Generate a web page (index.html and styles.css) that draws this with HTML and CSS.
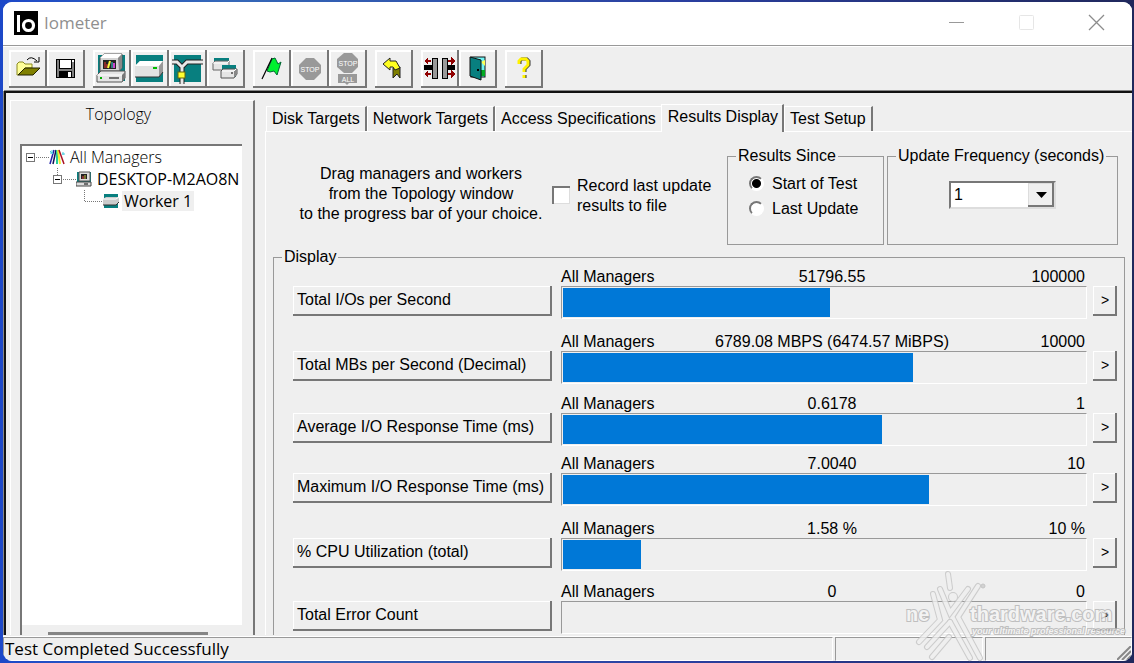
FILE: index.html
```html
<!DOCTYPE html>
<html lang="en">
<head>
    <meta charset="UTF-8">
    <meta name="viewport" content="width=device-width, initial-scale=1.0">
    <title>Iometer</title>
    <link rel="stylesheet" href="styles.css">
</head>
<body>

<div class="window">
    <header class="titlebar">
        <svg class="logo" viewBox="0 0 24 24" aria-hidden="true">
            <rect width="24" height="24" fill="#000"/>
            <rect x="3" y="4" width="3" height="17" fill="#fff"/>
            <circle cx="14.500" cy="14.500" r="5" fill="none" stroke="#fff" stroke-width="3.200"/>
        </svg>
        <h1>Iometer</h1>
        <div class="window-buttons">
            <button type="button" aria-label="Minimize"><svg viewBox="0 0 16 16"><path d="M0 7.500H15" stroke="#999"/></svg></button>
            <button type="button" aria-label="Maximize" disabled><svg viewBox="0 0 16 16"><rect x="0.500" y="0.500" width="14" height="14" rx="1" fill="none" stroke="#e6e6e6"/></svg></button>
            <button type="button" aria-label="Close"><svg viewBox="0 0 16 16"><path d="M0 0L15 15M15 0L0 15" stroke="#8c8c8c" stroke-width="1.300"/></svg></button>
        </div>
    </header>

    <nav class="toolbar" aria-label="Toolbar">
        <div class="tool-group">
            <button type="button" aria-label="Open">
                <svg viewBox="0 0 38 38">
                    <path d="M8 25V14L10 12H14L16 14H23V18H16L9 25Z" fill="#ffff99" stroke="#8a8a20"/>
                    <path d="M9 25L16 18H31L24 25Z" fill="#808000" stroke="#222200"/>
                    <path d="M18 10Q22 5 28 11M30 7V12H25" fill="none" stroke="#000"/>
                </svg>
            </button>
            <button type="button" aria-label="Save">
                <svg viewBox="0 0 38 38" shape-rendering="crispEdges">
                    <rect x="9" y="9" width="19" height="19" fill="#000"/>
                    <rect x="10" y="10" width="17" height="17" fill="#808080"/>
                    <rect x="12" y="9" width="13" height="10" fill="#000"/>
                    <rect x="13" y="10" width="11" height="8" fill="#fff"/>
                    <rect x="12" y="21" width="13" height="7" fill="#000"/>
                    <rect x="21" y="22" width="3" height="5" fill="#fff"/>
                    <rect x="25" y="10" width="2" height="2" fill="#fff"/>
                </svg>
            </button>
        </div>
        <div class="tool-group">
            <button type="button" aria-label="New manager">
                <svg viewBox="0 0 38 38">
                    <rect x="5" y="5" width="27" height="26" fill="#087f7f"/>
                    <path d="M7 8L11 4H29V18L26 21H7Z" fill="#d4d4d4" stroke="#555"/>
                    <path d="M7 8L11 4H29L25 8Z" fill="#fff"/>
                    <path d="M25 8L29 4V18L26 21Z" fill="#888"/>
                    <rect x="10" y="10" width="13" height="9" fill="#222"/>
                    <path d="M12 18V12M14 18V14" stroke="#e33"/>
                    <path d="M15 18L17 11" stroke="#f7f73b" stroke-width="2"/>
                    <path d="M19 18V12" stroke="#39d9d9"/>
                    <path d="M21 18V13" stroke="#c4c" stroke-width="2"/>
                    <path d="M4 25L8 21H32V28L29 32H4Z" fill="#e4e4e4" stroke="#555"/>
                    <path d="M29 25L32 22V28L29 32Z" fill="#777"/>
                    <path d="M4 25H29" stroke="#fff"/>
                    <path d="M16 28H26" stroke="#000"/>
                    <path d="M7 28H9" stroke="#0a0" stroke-width="2"/>
                </svg>
            </button>
            <button type="button" aria-label="New disk worker">
                <svg viewBox="0 0 38 38">
                    <rect x="5" y="5" width="27" height="27" fill="#087f7f"/>
                    <path d="M4 16L9 11H32V22L28 27H4Z" fill="#e2e2e2"/>
                    <path d="M4 16L9 11H32L28 16Z" fill="#fff"/>
                    <path d="M28 16L32 11V22L28 27Z" fill="#999"/>
                    <path d="M4 27H28L32 22" fill="none" stroke="#333"/>
                    <path d="M22 18H26" stroke="#0b0" stroke-width="2"/>
                </svg>
            </button>
            <button type="button" aria-label="New network worker">
                <svg viewBox="0 0 38 38">
                    <rect x="5" y="5" width="27" height="27" fill="#087f7f"/>
                    <path d="M3 12H8L13 17L18 12H34M13 17V34" fill="none" stroke="#222" stroke-width="5"/>
                    <path d="M3 12H8L13 17L18 12H34M13 17V34" fill="none" stroke="#e8e8e8" stroke-width="3"/>
                    <rect x="9" y="22" width="7" height="6" fill="#ffff30" stroke="#66660a"/>
                </svg>
            </button>
            <button type="button" aria-label="Duplicate worker">
                <svg viewBox="0 0 38 38">
                    <rect x="7" y="8" width="15" height="9" fill="#087f7f"/>
                    <path d="M6 13L8 11H22V17L20 20H6Z" fill="#e5e5e5" stroke="#666"/>
                    <path d="M6 13H20L22 11" fill="none" stroke="#fff"/>
                    <rect x="15" y="15" width="14" height="12" fill="#087f7f"/>
                    <path d="M14 21L16 19H30V24L27 28H14Z" fill="#e5e5e5" stroke="#555"/>
                    <path d="M27 21L30 19V24L27 28Z" fill="#888"/>
                    <path d="M15 21H27L29 19" fill="none" stroke="#fff"/>
                    <path d="M24 23H26" stroke="#000"/>
                </svg>
            </button>
        </div>
        <div class="tool-group">
            <button type="button" aria-label="Start tests">
                <svg viewBox="0 0 38 38">
                    <path d="M19 9L22 8L25 14L28 12L24 25L21 21L17 22L14 21Z" fill="#00f030" stroke="#063"/>
                    <path d="M9 29L19 8" stroke="#000" stroke-width="1.200"/>
                </svg>
            </button>
            <button type="button" aria-label="Stop test">
                <svg viewBox="0 0 38 38">
                    <path d="M15 8H23L30 15V23L23 30H15L8 23V15Z" fill="#999"/>
                    <text x="19" y="22" class="sign">STOP</text>
                </svg>
            </button>
            <button type="button" aria-label="Stop all tests">
                <svg viewBox="0 0 38 38">
                    <path d="M15 3H23L29 9V17L23 23H15L8 17V9Z" fill="#999"/>
                    <path d="M9 24H28V33H20L18 35L16 33H9Z" fill="#999"/>
                    <text x="19" y="16" class="sign">STOP</text>
                    <text x="19" y="32" class="sign">ALL</text>
                </svg>
            </button>
        </div>
        <div class="tool-group">
            <button type="button" aria-label="Reset">
                <svg viewBox="0 0 38 38">
                    <path d="M18 18L25 17V28L22 24L18 28Z" fill="#808000" stroke="#222"/>
                    <path d="M8 14L15 8V11H21L25 18L20 20L18 17H15V20Z" fill="#ffff20" stroke="#222"/>
                </svg>
            </button>
        </div>
        <div class="tool-group">
            <button type="button" aria-label="Disconnect">
                <svg viewBox="0 0 38 38" shape-rendering="crispEdges">
                    <rect x="3" y="15" width="8" height="5" fill="#000"/>
                    <rect x="27" y="15" width="7" height="5" fill="#000"/>
                    <rect x="11" y="8" width="5" height="20" fill="#999" stroke="#000"/>
                    <rect x="21" y="8" width="5" height="20" fill="#999" stroke="#000"/>
                    <path d="M5 11H10M5 24H10M27 11H33M27 24H33" stroke="#900000" stroke-width="2"/>
                    <path d="M7 7V15L3 11ZM7 20V28L3 24ZM30 7V15L34 11ZM30 20V28L34 24Z" fill="#900000"/>
                </svg>
            </button>
            <button type="button" aria-label="Exit">
                <svg viewBox="0 0 38 38">
                    <rect x="12" y="7" width="14" height="20" fill="#70f5f5" stroke="#111"/>
                    <path d="M22 12L26 10V16Z" fill="#ff5"/>
                    <rect x="22" y="20" width="4" height="6" fill="#0a2"/>
                    <path d="M11 7L22 10V30L11 26Z" fill="#087f7f" stroke="#111"/>
                    <path d="M19 19V21" stroke="#000" stroke-width="2"/>
                </svg>
            </button>
        </div>
        <div class="tool-group">
            <button type="button" aria-label="About">
                <svg viewBox="0 0 38 38">
                    <g fill="none" stroke-width="3">
                        <path d="M15 14V11L17 9H22L24 11V15L20 19V22M20 25V28" stroke="#333"/>
                        <path d="M14 14V11L16 9H21L23 11V15L19 19V22M19 25V28" stroke="#fff200"/>
                    </g>
                </svg>
            </button>
        </div>
    </nav>

    <main>
        <aside class="topology">
            <h2>Topology</h2>
            <div class="tree-box">
                <ul class="tree">
                    <li>
                        <div class="node">
                            <svg class="twig" viewBox="0 0 23 22">
                                <rect x="0.500" y="7.500" width="8" height="8" fill="#fff" stroke="#777"/>
                                <path d="M2 11.500H7" stroke="#000"/>
                                <path d="M10 11.500H23" stroke="#777" stroke-dasharray="1 1"/>
                            </svg>
                            <svg class="node-icon" viewBox="0 0 16 16">
                                <path d="M5 1L1 15" stroke="#22a" stroke-width="1.500"/>
                                <path d="M7 1L4 15" stroke="#115" stroke-width="1.500"/>
                                <path d="M8 1V15" stroke="#2c9" stroke-width="2"/>
                                <path d="M9 1L11 15" stroke="#ee3" stroke-width="2"/>
                                <path d="M10 1L15 15" stroke="#a12" stroke-width="1.500"/>
                                <path d="M1 2L4 5M3 1V5M1 4H4M14 3V6M13 5H16" stroke="#4cd"/>
                            </svg>
                            <span>All Managers</span>
                        </div>
                        <ul>
                            <li>
                                <div class="node">
                                    <svg class="twig" viewBox="0 0 23 22">
                                        <path d="M4.500 0V7M10 11.500H23" stroke="#777" stroke-dasharray="1 1"/>
                                        <rect x="0.500" y="7.500" width="8" height="8" fill="#fff" stroke="#777"/>
                                        <path d="M2 11.500H7" stroke="#000"/>
                                    </svg>
                                    <svg class="node-icon" viewBox="0 0 16 16">
                                        <rect x="1" y="1" width="14" height="14" fill="#087f7f"/>
                                        <path d="M3 1H14V10H3Z" fill="#ddd" stroke="#555"/>
                                        <rect x="5" y="3" width="6" height="5" fill="#222"/>
                                        <path d="M7 8V5" stroke="#e44"/>
                                        <path d="M9 8V4" stroke="#cc4"/>
                                        <path d="M0 11H15V15H0Z" fill="#ddd" stroke="#444"/>
                                        <path d="M8 13H12" stroke="#000"/>
                                    </svg>
                                    <span>DESKTOP-M2AO8N</span>
                                </div>
                                <ul>
                                    <li>
                                        <div class="node">
                                            <svg class="twig" viewBox="0 0 23 22">
                                                <path d="M4.500 0V11.500H23" fill="none" stroke="#777" stroke-dasharray="1 1"/>
                                            </svg>
                                            <svg class="node-icon" viewBox="0 0 16 16">
                                                <rect x="1" y="1" width="14" height="14" fill="#087f7f"/>
                                                <path d="M0 6L3 4H16V9L13 12H0Z" fill="#ccc"/>
                                                <path d="M0 6H13L16 4" fill="none" stroke="#fff"/>
                                                <path d="M0 12H13L16 9" fill="none" stroke="#333"/>
                                            </svg>
                                            <span class="selected">Worker 1</span>
                                        </div>
                                    </li>
                                </ul>
                            </li>
                        </ul>
                    </li>
                </ul>
                <div class="scrollbar"><div class="thumb"></div></div>
            </div>
        </aside>

        <section class="results">
            <div class="tabs" role="tablist">
                <button type="button" role="tab">Disk Targets</button>
                <button type="button" role="tab">Network Targets</button>
                <button type="button" role="tab">Access Specifications</button>
                <button type="button" role="tab" class="active" aria-selected="true">Results Display</button>
                <button type="button" role="tab">Test Setup</button>
            </div>

            <div class="pane" role="tabpanel">
                <div class="options">
                    <p>Drag managers and workers<br>from the Topology window<br>to the progress bar of your choice.</p>
                    <div class="record">
                        <input type="checkbox" id="record">
                        <label for="record">Record last update<br>results to file</label>
                    </div>
                    <fieldset>
                        <legend>Results Since</legend>
                        <div class="choice">
                            <input type="radio" name="since" id="sinceStart" checked>
                            <label for="sinceStart">Start of Test</label>
                        </div>
                        <div class="choice">
                            <input type="radio" name="since" id="sinceUpdate">
                            <label for="sinceUpdate">Last Update</label>
                        </div>
                    </fieldset>
                    <fieldset>
                        <legend><label for="frequency">Update Frequency (seconds)</label></legend>
                        <div class="combo">
                            <select id="frequency">
                                <option>1</option>
                                <option>2</option>
                                <option>5</option>
                            </select>
                            <span class="combo-arrow"><svg viewBox="0 0 11 6"><path d="M0 0H11L5.500 6Z"/></svg></span>
                        </div>
                    </fieldset>
                </div>

                <fieldset class="display">
                    <legend>Display</legend>
                    <div class="meters">
                        <div class="meter">
                            <button type="button" class="metric">Total I/Os per Second</button>
                            <div class="readout"><span>All Managers</span><span>51796.55</span><span>100000</span></div>
                            <div class="bar"><div class="fill" style="width: 51.2%"></div></div>
                            <button type="button" class="more">&gt;</button>
                        </div>
                        <div class="meter">
                            <button type="button" class="metric">Total MBs per Second (Decimal)</button>
                            <div class="readout"><span>All Managers</span><span>6789.08 MBPS (6474.57 MiBPS)</span><span>10000</span></div>
                            <div class="bar"><div class="fill" style="width: 67%"></div></div>
                            <button type="button" class="more">&gt;</button>
                        </div>
                        <div class="meter">
                            <button type="button" class="metric">Average I/O Response Time (ms)</button>
                            <div class="readout"><span>All Managers</span><span>0.6178</span><span>1</span></div>
                            <div class="bar"><div class="fill" style="width: 61.1%"></div></div>
                            <button type="button" class="more">&gt;</button>
                        </div>
                        <div class="meter">
                            <button type="button" class="metric">Maximum I/O Response Time (ms)</button>
                            <div class="readout"><span>All Managers</span><span>7.0040</span><span>10</span></div>
                            <div class="bar"><div class="fill" style="width: 70.1%"></div></div>
                            <button type="button" class="more">&gt;</button>
                        </div>
                        <div class="meter">
                            <button type="button" class="metric">% CPU Utilization (total)</button>
                            <div class="readout"><span>All Managers</span><span>1.58 %</span><span>10 %</span></div>
                            <div class="bar"><div class="fill" style="width: 15%"></div></div>
                            <button type="button" class="more">&gt;</button>
                        </div>
                        <div class="meter">
                            <button type="button" class="metric">Total Error Count</button>
                            <div class="readout"><span>All Managers</span><span>0</span><span>0</span></div>
                            <div class="bar"><div class="fill" style="width: 0%"></div></div>
                            <button type="button" class="more">&gt;</button>
                        </div>
                    </div>
                </fieldset>
            </div>
        </section>
    </main>

    <footer class="statusbar">
        <span>Test Completed Successfully</span>
        <span></span>
        <span>
            <svg class="grip" viewBox="0 0 14 14"><path d="M0 14L14 0M5 14L14 5M10 14L14 10" stroke="#888" stroke-width="2"/></svg>
        </span>
    </footer>
</div>

<svg class="watermark" viewBox="0 0 234 95" aria-hidden="true">
    <g class="mark-edge">
        <path d="M33 26L40 52L19 74M50 54L27 79M49 69L32 89M48 6L50 20"/>
        <path d="M40 21L50 45L68 21M78 18L58 49L80 90M50 54L70 90"/>
        <circle cx="53" cy="29" r="2"/>
    </g>
    <g class="mark-fill">
        <path d="M33 26L40 52L19 74M50 54L27 79M49 69L32 89M48 6L50 20"/>
        <path d="M40 21L50 45L68 21M78 18L58 49L80 90M50 54L70 90"/>
        <circle cx="53" cy="29" r="2"/>
    </g>
    <circle cx="83" cy="18" r="2" fill="#ccc" stroke="#bbb"/>
    <text x="6" y="53" class="mark-name">ne</text>
    <text x="70" y="53" class="mark-name">thardware.com</text>
    <text x="72" y="66" class="mark-line">your ultimate professional resource</text>
</svg>

</body>
</html>
```
FILE: styles.css
```css
* {
    box-sizing: border-box;
}
body {
    margin: 0;
    padding: 2px 2px 2px 3px;
    height: 100vh;
    overflow: hidden;
    position: relative;
    font-family: "Liberation Sans", Arial, sans-serif;
    font-size: 16px;
    line-height: 20px;
    color: #000;
    background: linear-gradient(90deg, #1d48c8 0%, #3568b8 20%, #2a3fa0 60%, #20285c 100%);
}
h1, h2, p, ul {
    margin: 0;
    padding: 0;
    font-weight: normal;
}
button, select {
    font: inherit;
    color: inherit;
}
svg {
    display: block;
}

/* window frame */
.window {
    display: flex;
    flex-direction: column;
    height: 100%;
    border-radius: 9px;
    overflow: hidden;
    background-color: #efefef;
}
.titlebar {
    display: flex;
    align-items: center;
    height: 44px;
    padding: 0 12px 2px 11px;
    flex: none;
    background-color: #fff;
    border-bottom: 1px solid #999;
}
.logo {
    width: 24px;
    height: 24px;
}
.titlebar h1 {
    flex: 1;
    padding-left: 6px;
    font-family: "Open Sans", sans-serif;
    font-size: 17px;
    color: #8f8f8f;
}
.window-buttons {
    display: flex;
    gap: 24px;
}
.window-buttons button {
    display: flex;
    justify-content: center;
    width: 46px;
    padding: 0;
    border: none;
    background: none;
}
.window-buttons svg {
    width: 16px;
    height: 16px;
    overflow: visible;
}

/* toolbar */
.toolbar {
    display: flex;
    flex: none;
    gap: 8px;
    padding: 3px 6px;
    border-top: 1px solid #fff;
}
.tool-group {
    display: flex;
}
.tool-group button {
    width: 38px;
    height: 38px;
    padding: 0;
    border: none;
    background-color: #efefef;
    box-shadow: inset -2px -2px #777, inset 2px 2px #fff;
}
.tool-group svg {
    width: 38px;
    height: 38px;
}
.sign {
    font-size: 7px;
    fill: #fff;
    text-anchor: middle;
}

/* work area */
main {
    display: flex;
    flex: 1;
    min-height: 0;
    margin-left: 1px;
    padding: 7px 0 0 4px;
    overflow: hidden;
    border-top: 2px solid #111;
    border-left: 2px solid #111;
    box-shadow: 0 -1px #888, -1px 0 #888;
}
.topology {
    display: flex;
    flex-direction: column;
    flex: none;
    width: 245px;
    padding: 3px 11px 0 9px;
    border-top: 1px solid #fff;
    border-left: 1px solid #fff;
    border-right: 2px solid #777;
}
.topology h2 {
    padding-right: 25px;
    text-align: center;
}
.topology h2, .tree {
    font-family: "Open Sans", sans-serif;
    font-weight: 300;
    font-size: 16px;
}
.tree-box {
    display: flex;
    flex-direction: column;
    flex: 1;
    margin-top: 20px;
    overflow: hidden;
    background-color: #fff;
    border-top: 2px solid #777;
    border-left: 2px solid #777;
}
.tree {
    flex: 1;
    padding-left: 4px;
    white-space: nowrap;
}
.tree ul {
    padding-left: 27px;
}
.tree li {
    list-style: none;
}
.node {
    display: flex;
    align-items: center;
    height: 22px;
}
.twig {
    flex: none;
    width: 23px;
    height: 22px;
}
.node-icon {
    flex: none;
    width: 16px;
    height: 16px;
    margin-right: 3px;
}
.node span {
    padding: 0 2px;
}
.selected {
    background-color: #efefef;
}
.scrollbar {
    height: 10px;
    padding: 7px 34px 0 26px;
    background-color: #efefef;
}
.thumb {
    height: 3px;
    background-color: #858585;
}

/* tabs */
.results {
    display: flex;
    flex-direction: column;
    flex: 1;
    min-width: 0;
    padding-left: 10px;
}
.tabs {
    display: flex;
    flex: none;
    align-items: flex-end;
    height: 31px;
    padding-left: 1px;
}
.tabs button {
    height: 25px;
    padding: 0 5px;
    white-space: nowrap;
    border: none;
    border-top: 1px solid #fff;
    border-left: 1px solid #fff;
    border-right: 2px solid #777;
    background-color: #efefef;
}
.tabs button:nth-child(3) {
    border-right: none;
}
.tabs .active {
    z-index: 1;
    height: 28px;
    margin-bottom: -1px;
    padding: 0 4px 3px 6px;
}
.pane {
    flex: 1;
    min-height: 0;
    padding: 14px 7px 0;
    overflow: hidden;
    border-top: 1px solid #fff;
    border-left: 1px solid #fff;
}
fieldset {
    min-width: 0;
    margin: 0;
    padding: 0 8px;
    border: 1px solid #999;
}
legend {
    padding: 0 2px;
}
.options {
    display: grid;
    grid-template-columns: 262px 175px 157px 1fr;
    height: 99px;
    margin: 0 7px 2px 17px;
}
.options p {
    padding-top: 18px;
    text-align: center;
}
.record {
    display: flex;
    padding-top: 30px;
    gap: 7px;
}
.record input {
    flex: none;
    appearance: none;
    width: 18px;
    height: 18px;
    margin: 10px 0 0;
    background-color: #fff;
    box-shadow: inset 2px 2px #777, inset -1px -1px #ddd;
}
.choice {
    display: flex;
    align-items: center;
    gap: 8px;
    height: 25px;
    padding-left: 13px;
}
legend + .choice {
    margin-top: 5px;
}
.choice input {
    appearance: none;
    width: 15px;
    height: 15px;
    margin: 0;
    border: 2px solid;
    border-color: #777 #fff #fff #777;
    border-radius: 50%;
    background-color: #fff;
}
.choice input:checked {
    background-image: radial-gradient(circle, #000 4px, #fff 5px);
}
.options fieldset:last-child {
    margin-left: 3px;
}
.combo {
    display: grid;
    width: 107px;
    height: 28px;
    margin: 15px auto 0;
    border: 2px solid;
    border-color: #777 #ddd #ddd #777;
}
.combo select, .combo-arrow {
    grid-area: 1 / 1;
}
.combo select {
    appearance: none;
    padding: 0 3px;
    border: none;
    border-radius: 0;
    background-color: #fff;
}
.combo-arrow {
    display: flex;
    align-items: center;
    justify-content: center;
    justify-self: end;
    width: 26px;
    background-color: #efefef;
    box-shadow: inset -2px -2px #777, inset 1px 1px #ddd;
    pointer-events: none;
}
.combo-arrow svg {
    width: 11px;
    height: 6px;
}

/* meters */
.display {
    padding: 0 7px 0 19px;
}
.display legend {
    margin-left: -11px;
}
.meters {
    display: grid;
    grid-template-rows: 65px 62px 60px 65px 63px 65px;
}
.meter {
    display: grid;
    grid-template-columns: 262px 1fr 24px;
    grid-template-rows: 19px 33px;
    column-gap: 6px;
}
.metric, .more {
    grid-row: 2;
    height: 30px;
    padding: 0 4px 2px;
    border: none;
    background-color: #efefef;
    box-shadow: inset -2px -2px #777, inset 1px 1px #fff;
}
.metric {
    margin-right: 3px;
    text-align: left;
}
.more {
    grid-column: 3;
    font-size: 14px;
}
.readout {
    display: grid;
    grid-column: 2;
    grid-template-columns: 96px 1fr 78px;
    padding-right: 2px;
    text-align: center;
    white-space: nowrap;
}
.readout span:first-child {
    text-align: left;
}
.readout span:last-child {
    text-align: right;
}
.bar {
    grid-column: 2;
    grid-row: 2;
    padding: 1px;
    border: 1px solid;
    border-color: #999 #fff #fff #999;
}
.fill {
    height: 100%;
    background-color: #0078d7;
}

/* status bar */
.statusbar {
    display: grid;
    grid-template-columns: 830px 1fr 1fr;
    gap: 2px;
    flex: none;
    height: 25px;
    margin-top: 1px;
    border-top: 1px solid #fff;
    font-family: "Open Sans", sans-serif;
    font-size: 17px;
    line-height: 22px;
}
.statusbar span {
    display: flex;
    align-items: flex-end;
    padding-left: 1px;
    border-top: 1px solid #999;
    border-left: 1px solid #999;
    border-right: 1px solid #fff;
    border-bottom: 1px solid #fff;
}
.grip {
    width: 14px;
    height: 14px;
    margin-left: auto;
}

/* translucent site mark over the lower right corner */
.watermark {
    position: absolute;
    right: 0;
    bottom: 0;
    width: 234px;
    height: 95px;
    opacity: 0.8;
    pointer-events: none;
}
.mark-edge, .mark-fill {
    fill: none;
    stroke: #c4c4c4;
    stroke-width: 6;
    stroke-linecap: round;
}
.mark-fill {
    stroke: #efefef;
    stroke-width: 4;
}
.mark-name, .mark-line {
    font-weight: bold;
    fill: #f4f4f4;
    stroke: #b4b4b4;
    stroke-width: 2px;
    paint-order: stroke;
}
.mark-name {
    font-size: 20px;
}
.mark-line {
    font-size: 9px;
    font-style: italic;
}
```
